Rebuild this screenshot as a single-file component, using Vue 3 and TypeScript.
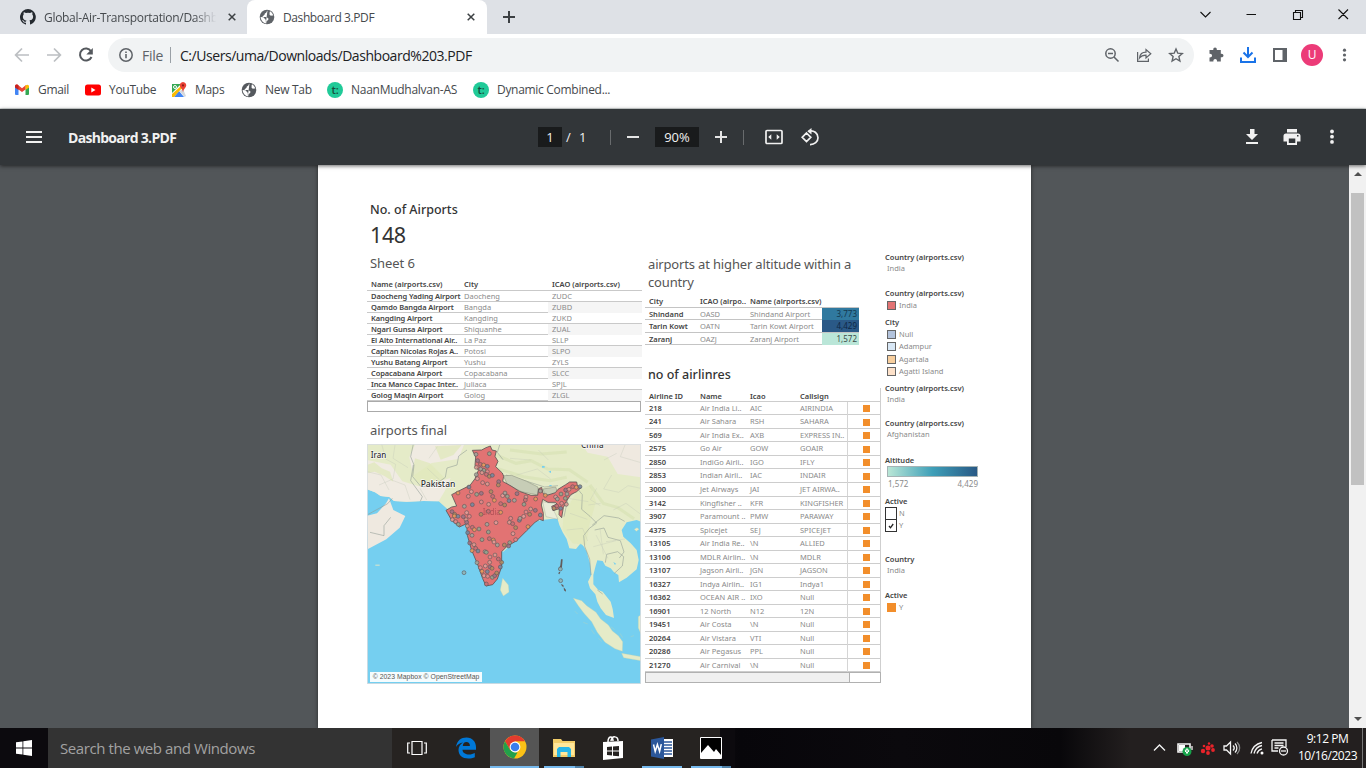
<script setup lang="ts">
interface Airport { name: string; city: string; icao: string }
interface Airline { id: string; name: string; icao: string; call: string }

const airports: Airport[] = [
  ['Daocheng Yading Airport', 'Daocheng', 'ZUDC'],
  ['Qamdo Bangda Airport', 'Bangda', 'ZUBD'],
  ['Kangding Airport', 'Kangding', 'ZUKD'],
  ['Ngari Gunsa Airport', 'Shiquanhe', 'ZUAL'],
  ['El Alto International Air..', 'La Paz', 'SLLP'],
  ['Capitan Nicolas Rojas A..', 'Potosi', 'SLPO'],
  ['Yushu Batang Airport', 'Yushu', 'ZYLS'],
  ['Copacabana Airport', 'Copacabana', 'SLCC'],
  ['Inca Manco Capac Inter..', 'Juliaca', 'SPJL'],
  ['Golog Maqin Airport', 'Golog', 'ZLGL'],
].map(([name, city, icao]) => ({ name, city, icao }))

const altitudes = [
  { city: 'Shindand', icao: 'OASD', name: 'Shindand Airport', value: '3,773', tone: 'mid' },
  { city: 'Tarin Kowt', icao: 'OATN', name: 'Tarin Kowt Airport', value: '4,429', tone: 'high' },
  { city: 'Zaranj', icao: 'OAZJ', name: 'Zaranj Airport', value: '1,572', tone: 'low' },
]

const airlines: Airline[] = [
  ['218', 'Air India Li..', 'AIC', 'AIRINDIA'],
  ['241', 'Air Sahara', 'RSH', 'SAHARA'],
  ['569', 'Air India Ex..', 'AXB', 'EXPRESS IN..'],
  ['2575', 'Go Air', 'GOW', 'GOAIR'],
  ['2850', 'IndiGo Airli..', 'IGO', 'IFLY'],
  ['2853', 'Indian Airli..', 'IAC', 'INDAIR'],
  ['3000', 'Jet Airways', 'JAI', 'JET AIRWA..'],
  ['3142', 'Kingfisher ..', 'KFR', 'KINGFISHER'],
  ['3907', 'Paramount ..', 'PMW', 'PARAWAY'],
  ['4375', 'Spicejet', 'SEJ', 'SPICEJET'],
  ['13105', 'Air India Re..', '\\N', 'ALLIED'],
  ['13106', 'MDLR Airlin..', '\\N', 'MDLR'],
  ['13107', 'Jagson Airli..', 'JGN', 'JAGSON'],
  ['16327', 'Indya Airlin..', 'IG1', 'Indya1'],
  ['16362', 'OCEAN AIR ..', 'IXO', 'Null'],
  ['16901', '12 North', 'N12', '12N'],
  ['19451', 'Air Costa', '\\N', 'Null'],
  ['20264', 'Air Vistara', 'VTI', 'Null'],
  ['20286', 'Air Pegasus', 'PPL', 'Null'],
  ['21270', 'Air Carnival', '\\N', 'Null'],
].map(([id, name, icao, call]) => ({ id, name, icao, call }))

const dots: number[][] = [
  [348,58],[388,56],[353,77],[349,97],[361,88],[371,90],[382,94],[362,102],[372,106],[382,110],[366,113],[379,118],[388,124],[397,121],[349,119],[352,131],[368,143],[382,147],[416,140],[415,150],[327,156],[294,174],[334,170],[325,184],[350,178],[364,175],[393,170],[398,184],[403,196],[428,182],[435,174],[442,184],[471,176],[498,186],[496,195],[527,192],[447,197],[463,196],[492,208],[364,201],[386,208],[422,206],[434,210],[337,209],[313,214],[320,233],[328,244],[318,254],[276,230],[284,238],[294,244],[283,243],[277,254],[287,260],[295,268],[310,245],[363,238],[385,229],[422,232],[408,263],[381,268],[357,282],[320,262],[322,273],[337,277],[343,284],[323,293],[336,301],[385,291],[452,250],[448,262],[458,266],[467,278],[478,256],[480,250],[491,244],[498,231],[512,222],[526,226],[509,238],[541,240],[504,275],[459,296],[467,314],[449,323],[446,333],[433,330],[388,311],[400,315],[402,321],[412,330],[366,314],[329,324],[342,329],[347,340],[336,347],[354,348],[375,350],[379,352],[390,366],[405,360],[415,372],[425,382],[421,396],[351,383],[376,393],[361,398],[389,382],[390,396],[396,400],[382,410],[366,409],[372,422],[383,424],[397,427],[404,422],[410,414],[379,447],
  [556,181],[587,186],[592,192],[603,177],[617,165],[627,163],[638,155],[649,157],[660,155],[621,177],[616,190],[605,205],[619,208],[590,213],[582,220],[602,220],[541,168],
  [312,413],[601,402],[602,437],
]
const dotColors = ['#a3a59b', '#d99a90', '#7488a0', '#e08a89', '#b08c62', '#e39c98', '#9c7486', '#e89a5c', '#93a58f', '#c87076']
</script>

<template>
  <div class="screen">
    <header class="tabstrip">
      <div class="tab">
        <svg class="i16" viewBox="0 0 16 16"><path fill="#24292f" d="M8 0a8 8 0 0 0-2.5 15.6c.4.1.5-.2.5-.4v-1.5c-2.2.5-2.7-.9-2.7-.9-.4-.9-.9-1.200-.9-1.200-.7-.5.1-.5.1-.5.8.1 1.200.8 1.200.8.7 1.200 1.900.9 2.300.7.1-.5.3-.9.5-1.100-1.800-.2-3.600-.9-3.600-4 0-.9.3-1.600.8-2.100 0-.2-.3-1 .1-2.100 0 0 .7-.2 2.200.8a7.500 7.500 0 0 1 4 0c1.500-1 2.200-.8 2.200-.8.4 1.100.1 1.900.1 2.100.5.6.8 1.300.8 2.100 0 3.100-1.900 3.700-3.700 3.900.3.300.6.800.6 1.500v2.200c0 .2.1.5.6.4A8 8 0 0 0 8 0z"/></svg>
        <span class="tabtitle fade">Global-Air-Transportation/Dashb</span>
        <svg class="x" viewBox="0 0 8 8"><path d="M.7.7l6.600 6.600M7.300.7L.7 7.300"/></svg>
      </div>
      <div class="tab active">
        <svg class="i16 globe" viewBox="0 0 16 16"><circle cx="8" cy="8" r="7.300" fill="#5f6368"/><path fill="#fff" d="M8.500 1.500c-1.200 1-.6 2.300-2.200 2.700-.9.300-.3 1.500-1.200 1.900L3.200 8H7c1.500.100 1.400 1.400 2.600 1.700-.2 1.900-1.900 1.600-2.200 3.100l-.2 1.600A6.500 6.500 0 0 1 1.600 8l2.900.2L6 10c.9.600 1 1.500.8 4.300M11 2.300c1.500.9 2.800 2.500 3.300 4.200-1.600-.2-2.300.6-3.300-.3-1.200-1 .5-1.200-.6-2z"/></svg>
        <span class="tabtitle">Dashboard 3.PDF</span>
        <svg class="x" viewBox="0 0 8 8"><path d="M.7.7l6.600 6.600M7.300.7L.7 7.300"/></svg>
      </div>
      <svg class="plus" viewBox="0 0 12 12"><path d="M6 0v12M0 6h12"/></svg>
      <svg class="winctl" viewBox="0 0 150 14"><g fill="none" stroke="#111" stroke-width="1.100"><path d="M.5 5l5 5 5-5M46.500 7.500h9.500M93.500 5.500h7v7h-7zM95.500 5.500v-2h7v7h-2M138.500 2.500l9.500 9.500M148 2.500l-9.500 9.500"/></g></svg>
    </header>

    <div class="toolbar">
      <svg class="nav" viewBox="0 0 84 18"><g fill="none" stroke="#bcbfc2" stroke-width="1.700"><path d="M15 9H2M8 2.500L1.600 9 8 15.500M33 9h13M40 2.500L46.400 9 40 15.500"/></g><path fill="none" stroke="#54585d" stroke-width="2" d="M77 5.200A6 6 0 1 0 77.500 11"/><path fill="#54585d" d="M78.800 2v6.500h-6.500z"/></svg>
      <div class="omni">
        <svg class="info" viewBox="0 0 14 14"><circle cx="7" cy="7" r="6.200" fill="none" stroke="#5f6368" stroke-width="1.500"/><path stroke="#5f6368" stroke-width="1.600" d="M7 6v4.300M7 3.400V5"/></svg>
        <span class="file">File</span><i></i><span class="url">C:/Users/uma/Downloads/Dashboard%203.PDF</span>
        <svg class="omniicons" viewBox="0 0 80 18"><g fill="none" stroke="#5f6368" stroke-width="1.500"><circle cx="6.500" cy="7.500" r="4.700"/><path d="M10 11l4.500 4.500M4 7.500h5"/><path stroke-width="1.200" d="M33.600 6v9.400h10.800V12.500M35.500 12c.5-4 3-5.800 6.500-5.800V3.500l4.800 4.200-4.800 4.200V9.200c-3 0-5 .8-6.500 2.800z"/><path stroke-width="1.400" d="M72 3l1.800 4.200 4.500.4-3.400 3 1 4.400-3.900-2.300-3.900 2.300 1-4.400-3.400-3 4.500-.4z"/></g></svg>
      </div>
      <svg class="tools" viewBox="0 0 150 24"><path fill="#5f6368" d="M2.500 7h3.800c-.5-3.300 4-3.300 3.500 0h4v3.700c3.600-.5 3.600 4.100 0 3.600v4.200H10c.3-3.200-3.900-3.200-3.600 0H2.500v-4c3.400.2 3.400-4 0-3.700z"/><path fill="none" stroke="#1a73e8" stroke-width="2" d="M41 4v10M36.500 9.500L41 14l4.500-4.500M34 14.500V19h14v-4.500"/><path fill="none" stroke="#5f6368" stroke-width="2" d="M67 6h12v12H67z"/><path fill="#5f6368" d="M75.500 6H80v13h-4.500z"/><circle cx="105" cy="12" r="11" fill="#ec3b78"/><g fill="#5f6368"><circle cx="137.500" cy="7.200" r="1.600"/><circle cx="137.500" cy="12" r="1.600"/><circle cx="137.500" cy="16.800" r="1.600"/></g><text x="105" y="16.300" text-anchor="middle" fill="#fff" font-family="Open Sans" font-size="12">U</text></svg>
    </div>

    <nav class="bookmarks">
      <div class="bm b1"><svg viewBox="0 0 16 16"><path fill="#4285f4" d="M1 4l3.500 2.500V13H2a1 1 0 0 1-1-1z"/><path fill="#34a853" d="M15 4l-3.500 2.500V13H14a1 1 0 0 0 1-1z"/><path fill="#ea4335" d="M1 4.500C1 2.500 2.500 2 4 3l4 3.200L12 3l-.5 4.500L8 10 4.500 7.500z"/><path fill="#fbbc04" d="M11.500 3.400C13.500 2 15 2.800 15 4.500v1l-3.500 2.600z"/><path fill="#c5221f" d="M1 4.500C1 3 2.500 2 4 3l.5.4V8L1 5.500z"/></svg><span>Gmail</span></div>
      <div class="bm b2"><svg viewBox="0 0 16 16"><rect y="2.500" width="16" height="11" rx="2.500" fill="#f00"/><path fill="#fff" d="M6.300 5.500L10.500 8l-4.200 2.500z"/></svg><span>YouTube</span></div>
      <div class="bm b3"><svg viewBox="0 0 16 16"><path fill="#34a853" d="M1 2h9L1 11z"/><path fill="#4285f4" d="M3 15l5-6 5 6z"/><path fill="#fbbc04" d="M1 15v-3l9-8 1.500 1.500L3 15z"/><path fill="#d5d8dc" d="M8.500 9L12 7l3 7-1.500 1z"/><path fill="#ea4335" d="M12 0a3.300 3.300 0 0 1 3 4.500C14.500 6 12.500 7 12 10c-.5-3-2.500-4-3-5.500A3.300 3.300 0 0 1 12 0z"/><circle cx="12" cy="3.400" r="1.100" fill="#8c1d18"/><circle cx="4" cy="5" r="1.500" fill="none" stroke="#fff"/></svg><span>Maps</span></div>
      <div class="bm b4"><svg viewBox="0 0 16 16"><circle cx="8" cy="8" r="7.300" fill="#55595e"/><path fill="#fff" d="M8.500 1.500c-1.200 1-.6 2.300-2.200 2.700-.9.300-.3 1.500-1.200 1.900L3.200 8H7c1.500.100 1.400 1.400 2.600 1.700-.2 1.900-1.900 1.600-2.200 3.100l-.2 1.600A6.500 6.500 0 0 1 1.600 8l2.900.2L6 10c.9.600 1 1.500.8 4.300M11 2.300c1.500.9 2.800 2.500 3.300 4.200-1.600-.2-2.300.6-3.300-.3-1.200-1 .5-1.200-.6-2z"/></svg><span>New Tab</span></div>
      <div class="bm b5"><b>t:</b><span>NaanMudhalvan-AS</span></div>
      <div class="bm b6"><b>t:</b><span>Dynamic Combined...</span></div>
    </nav>

    <div class="pdfbar">
      <div class="pleft"><svg width="16" height="12" viewBox="0 0 16 12"><path stroke="#f1f1f1" stroke-width="2" d="M0 1h16M0 6h16M0 11h16"/></svg><strong>Dashboard 3.PDF</strong></div>
      <div class="pmid">
        <span class="pageno">1</span><span class="slash">/</span><span class="total">1</span><i></i>
        <svg class="minus" viewBox="0 0 12 12"><path d="M0 6h12"/></svg>
        <span class="zoom">90%</span>
        <svg class="plusz" viewBox="0 0 12 12"><path d="M0 6h12M6 0v12"/></svg><i class="second"></i>
        <svg class="fit" viewBox="0 0 18 16"><rect x="1" y="1.500" width="16" height="13" rx="1" fill="none" stroke="#f1f1f1" stroke-width="1.700"/><path fill="#f1f1f1" d="M3.200 8L6.300 5.300v5.400zM14.800 8l-3.100-2.700v5.400z"/></svg>
        <svg class="rot" viewBox="0 0 18 18"><path fill="none" stroke="#f1f1f1" stroke-width="1.700" d="M5.500 5L9.800 9.300 5.500 13.600 1.200 9.300zM7.500 3.200C13 1.500 17 5.500 17 9.700c0 4-3.500 7-8 6.900"/><path fill="#f1f1f1" d="M10.500 0v6.500L6.300 3.300z"/></svg>
      </div>
      <svg class="pright" viewBox="0 0 92 18"><g fill="#f1f1f1"><path d="M5 1h4.500v5H13l-6 6-6-6h4zM1 14h12v2H1zM42 1h10v3.500H42z"/><path d="M41 5.500h12A2.500 2.500 0 0 1 55.500 8v5.500H52V17H42v-3.500h-3.500V8A2.500 2.500 0 0 1 41 5.500z"/><circle cx="87" cy="3.500" r="1.900"/><circle cx="87" cy="8.700" r="1.900"/><circle cx="87" cy="13.900" r="1.900"/></g><path fill="#323639" d="M43.800 10.500h6.500v4.500h-6.500zM52 7h1.500v1.500H52z"/></svg>
    </div>

    <main class="viewer">
      <article class="page">
        <section class="left">
          <h2 class="kpi">No. of Airports</h2>
          <p class="big">148</p>
          <h3>Sheet 6</h3>
          <div class="arow ahead"><b>Name (airports.csv)</b><b>City</b><b>ICAO (airports.csv)</b></div>
          <div v-for="a in airports" :key="a.icao" class="arow"><b>{{ a.name }}</b><span>{{ a.city }}</span><span class="shade">{{ a.icao }}</span></div>
          <div class="hscroll"></div>
          <h3 class="maptitle">airports final</h3>
          <svg class="map" viewBox="21 27 822 720">
            <rect x="21" y="27" width="822" height="720" fill="#75cff0"/>
            <path fill="#e5ebc8" d="M21 27V163L45 172 62 183 88 186 102 198 140 200 190 198 236 199 262 222 300 240 340 300 430 350 500 285 520 262 545 255 592 250 598 270 608 292 620 312 628 340 648 342 662 325 672 335 680 350 690 385 694 420 684 440 690 460 706 478 712 500 722 520 738 540 762 549 758 522 752 500 740 485 728 470 715 465 700 448 700 420 707 392 712 376 728 378 736 392 752 400 762 412 775 420 777 442 800 428 830 403 836 375 830 345 812 325 790 305 785 285 800 262 830 255 843 260V27z"/>
            <path fill="#f0ebe2" d="M21 27h145l-18 40 12 55 55-38 80-12 18-45H21zM21 75v88l24 9 17 11 26 3 14 12 38 2 50-2 46 1 18-30 18-40-95 25-50-15-35-50z"/>
            <path fill="#efe9e0" d="M21 242l30-7 27-30 9-15 13 35 36 18-17 35-40 35-55 29zM665 27h178v100l-70-10-30-52-60-12z"/>
            <path fill="#e0e8bb" d="M21 90l22-8 22 18 25 10 10 30-28-18-28-12-23 4zM165 70l45 15 45 45-34 22-48-9-18-25zM225 34l80-4-25 30-38 14zM610 240l40-70 40-20 18 50-20 70-10 60-40-5-30-40z" opacity=".75"/>
            <g fill="none" stroke="#d4dfae" stroke-width="9" opacity=".5"><path d="M408 60l60 25 45-8 50 25 65 2 55 38M410 100l80 25 80 12 50-10M450 45l95 12 75-6M690 150l40 55 42 12 50 34"/></g>
            <g fill="none" stroke="#929c94" stroke-width="1.700"><path d="M160 27l-8 38 10 25-4 35 25 30 38-3 35-25 5-28 30-9 5-27 25-18M160 90l-8 47 35 48-6 14M21 240l62-34 14-16M30 292l42 10M72 302v-30l20-25M420 27l-8 25 17 22M438 120l60 18 56 18 40-4M612 245l12-55 29-28 14 17-2 44 25 21 20 20-22 16-17 22 3 32 15 38 4 48M697 270l35-28 44 7 18 10M704 285l28-6 12 28 37 10 11 34-14 18M740 358l33-8 18 15-4 28-24 22M740 358l-4 25M712 465l16 12"/></g>
            <g fill="none" stroke="#bfc5b7" stroke-width="1"><path d="M65 27l12 45 30 16-8 44-42 18M105 30l-6 40 45 28M21 110l42 10 24 45M95 135l40 15 15 44M180 160l20 35M202 100l36 34M232 35l-25 35M625 190l60 10M630 235l52 18M620 285l48-5 15 38M708 300l36 70M700 335l68-18M720 280l10 78M738 320l57-8M760 225l38-20 43 32M710 160l-19 34 30 18M685 210l37-5M755 120l-24 42 45 10 28-20 39 8M770 55l-38 20M450 70l62 5M535 45l30 30M470 120l62-18 40 30M795 30l-14 35 62 18"/></g>
            <path fill="#c7cdb6" stroke="#858a79" stroke-width="1.500" d="M430 122l25-1 45 18 34 17v24l-50-10-42-22zM549 162l38-6 6 16-18 8-20-1z"/>
            <path fill="#e9ecd8" stroke="#929c94" d="M548 200l15 3 27 3-12 15 8 15 8 17-36-8z"/>
            <g fill="#e5ebc8" stroke="#c6d5ae"><path d="M428 430l17 20 2 21-17 12-9-18zM640 490L665 497 680 512 708 532 722 552 745 570 757 588 775 602 788 620 787 649 765 641 735 622 712 592 695 560 672 535 655 512zM785 655l58 10v12l-52-9zM835 545l8-6v58l-8-18zM670 562l13 5M694 584l10 14M715 610l11 10M752 575l12 9M780 595l8 13M812 605l10-3M645 529l8 8M823 283l8-5 6 5-8 6z"/></g>
            <path fill="#75cff0" d="M546 93h8v5h-8zM565 110l8-3v7zM568 150h7v3h-7zM760 380l9 7-5 2z"/>
            <path fill="#dfe6c9" d="M46 389h13v3H46z"/>
            <path fill="#e27373" stroke="#5b5555" stroke-width="2.500" stroke-linejoin="round" d="M337 46l28-1 13-7 13-5 5 12 13 3-4 16 9 15-7 16 20 19 4 10-3 15 25 14 25 16 35 12h20l3-20 9-4 4 18 9 7 28-9 8-10 23-14 12-8h21l2 10 10 8-12 11-18 9-12 18-10 21-5 30-8-9 1-18-19 6-4-13 16-7-5-5h-22l-16-9-4 17 6 25v22l-11-4-14 9-25 25-30 30-30 18-15 15v45l-13 37-14 17-20 4-10-22-16-45-17-40-13-45-2-35-22 10-23-20-17-30 17-10 15-3-15-34 25-13 30-15 15-20 10-25-10-15 2-25z"/>
            <path fill="#625b5b" d="M603 373h5l-2 22-7 12-3-4 5-12zM597 410l4 2-3 6-3-2zM603 447l7 3 1 6-5-2zM611 457l7 8-1 5-5-4z"/>
            <text x="368" y="239" font-family="Noto Sans" font-size="24" fill="#a84750" opacity=".75" textLength="54">India</text>
            <circle v-for="(d, i) in dots" :key="i" :cx="d[0]" :cy="d[1]" r="5.800" :fill="i > dots.length - 4 ? '#8fb5b8' : dotColors[(i * 7 + i % 3) % 10]" fill-opacity=".9" stroke="#5d5657" stroke-opacity=".9" stroke-width="2"/>
            <g font-family="Noto Sans" font-size="24" fill="#2c2c2c" stroke="#fff" stroke-width="3" paint-order="stroke" font-weight="500"><text x="32" y="69" textLength="47">Iran</text><text x="182" y="155" textLength="104" lengthAdjust="spacingAndGlyphs">Pakistan</text><text x="663" y="38" textLength="68">China</text></g>
            <path fill="#fff" opacity=".93" d="M30 711h336v30H30z"/><text x="38" y="732" font-family="Liberation Sans" font-size="20.500" fill="#555" textLength="320">© 2023 Mapbox © OpenStreetMap</text>
            <rect x="22" y="28" width="820" height="718" fill="none" stroke="#d8dde0" stroke-width="3"/>
          </svg>
        </section>

        <section class="mid">
          <h3 class="alt">airports at higher altitude within a country</h3>
          <div class="hrow hhead"><b>City</b><b>ICAO (airpo..</b><b>Name (airports.csv)</b></div>
          <div v-for="h in altitudes" :key="h.icao" class="hrow"><b>{{ h.city }}</b><span>{{ h.icao }}</span><span>{{ h.name }}</span><em :class="h.tone">{{ h.value }}</em></div>
          <h2 class="airtitle">no of airlinres</h2>
          <div class="airtable">
            <div class="lrow lhead"><b>Airline ID</b><b>Name</b><b>Icao</b><b>Callsign</b></div>
            <div v-for="l in airlines" :key="l.id" class="lrow"><b>{{ l.id }}</b><span>{{ l.name }}</span><span>{{ l.icao }}</span><span>{{ l.call }}</span><em><i></i></em></div>
          </div>
          <div class="lscroll"><i></i></div>
        </section>

        <aside class="legend">
          <div class="g g1"><b>Country (airports.csv)</b><span class="in">India</span></div>
          <div class="g g2"><b>Country (airports.csv)</b><span class="key"><i class="red"></i>India</span></div>
          <div class="g g3"><b>City</b><span class="key"><i class="c1"></i>Null</span><span class="key"><i class="c2"></i>Adampur</span><span class="key"><i class="c3"></i>Agartala</span><span class="key"><i class="c4"></i>Agatti Island</span></div>
          <div class="g g4"><b>Country (airports.csv)</b><span class="in">India</span></div>
          <div class="g g5"><b>Country (airports.csv)</b><span class="in">Afghanistan</span></div>
          <div class="g g6"><b>Altitude</b><div class="ramp"></div><div class="range"><span>1,572</span><span>4,429</span></div></div>
          <div class="g g7"><b>Active</b><span class="chk"><i></i>N</span><span class="chk"><i><svg viewBox="0 0 8 8"><path d="M2 4l1.500 1.800L6.200 2"/></svg></i>Y</span></div>
          <div class="g g8"><b>Country</b><span class="in">India</span></div>
          <div class="g g9"><b>Active</b><span class="key"><i class="or"></i>Y</span></div>
        </aside>
      </article>
      <div class="sb"><svg viewBox="0 0 8 4"><path d="M0 4l4-4 4 4z"/></svg><div class="thumb"></div><svg viewBox="0 0 8 4"><path d="M0 0l4 4 4-4z"/></svg></div>
    </main>

    <footer class="taskbar">
      <div class="start"><svg viewBox="0 0 16 16"><path fill="#fff" d="M0 2.300L6.500 1.400V7.600H0zM7.300 1.300L16 0v7.600H7.300zM0 8.400h6.500v6.200L0 13.700zM7.300 8.400H16V16l-8.700-1.300z"/></svg></div>
      <div class="search">Search the web and Windows</div>
      <div class="apps">
        <div class="app"><svg width="20" height="16" viewBox="0 0 20 16"><g fill="none" stroke="#fff" stroke-width="1.200"><path d="M5 1.500h10v13H5zM3 3H.7v10H3M17 3h2.300v10H17"/></g></svg></div>
        <div class="app"><svg width="20" height="22" viewBox="0 0 20 22"><path fill="#0078d7" d="M0 10C1 3.500 5 .5 10.500.5c6 0 9.500 4.500 9.500 9.500v2.700H6.500c.2 3.300 3.200 4.700 6.500 4.700 2.200 0 4.200-.6 5.800-1.500v4.300c-1.800.9-4 1.400-6.500 1.400-6 0-9.800-3.500-9.800-8.500 0-3.500 2-6 4.600-7.500C4 6 1.500 7.500 0 10zM6.800 9h7.100c0-2.500-1.300-4-3.500-4S7 6.500 6.800 9z"/></svg></div>
        <div class="app on"><svg width="24" height="24" viewBox="0 0 24 24"><circle cx="12" cy="12" r="11.500" fill="#fbc116"/><path fill="#e33b2e" d="M2 6.300A11.500 11.500 0 0 1 22 6.300H12l-5 8.500z"/><path fill="#22a04b" d="M2 6.300l5 8.500 5 2.700h2.500L11 23.500A11.500 11.500 0 0 1 2 6.300z"/><circle cx="12" cy="12" r="5.400" fill="#fff"/><circle cx="12" cy="12" r="4.300" fill="#3b7ded"/></svg></div>
        <div class="app run"><svg width="22" height="20" viewBox="0 0 22 20"><path fill="#f2cd69" d="M0 1h8l1.500 2H22v16H0z"/><path fill="#ffe79a" d="M1 5h20v12H1z"/><path fill="#28b6e8" d="M4 19v-8l2-2h10l2 2v8h-3.500v-5h-7v5z"/></svg></div>
        <div class="app"><svg width="22" height="24" viewBox="0 0 22 24"><path fill="#fff" d="M1 6l20-1v17L1 24z"/><path fill="none" stroke="#fff" stroke-width="1.500" d="M6 6c0-6 5-7 5-1M9 5c1-6 7-5 7 0"/><path fill="#262321" d="M5 11l5-.4v4H5zM11 10.500l6-.4v4.500h-6zM5 15.600h5v4L5 19zM11 15.600h6v4.600l-6-.5z"/></svg></div>
        <div class="app w"><svg width="22" height="22" viewBox="0 0 22 22"><path fill="#fff" d="M12 2h10v18H12z"/><path stroke="#2b579a" stroke-width="1.300" d="M13 5h8M13 8h8M13 11h8M13 14h8M13 17h8"/><path fill="#2b579a" d="M0 2.500L13 0v22L0 19.500z"/><path fill="none" stroke="#fff" stroke-width="1.500" d="M2.500 7.500l1.700 7 2.200-7 2.200 7 1.700-7.300"/></svg></div>
        <div class="app run"><svg width="22" height="22" viewBox="0 0 22 22"><path fill="#000" stroke="#fff" d="M.5.5h21v21H.5z"/><path fill="#fff" d="M1 20v-4l7-8 6 7 2-3 5 6v3H1z"/></svg></div>
      </div>
      <div class="tray">
        <svg viewBox="0 0 140 20"><g fill="none" stroke="#f4f4f4" stroke-width="1.300"><path d="M1 12.500L6.500 7l5.500 5.500"/><path stroke-width="1.600" d="M25 6h12v8H25z"/><path d="M39 8v4"/><path d="M71 8h2.500l4-4v12l-4-4H71zM80 7.500c1.500 1.500 1.500 3.500 0 5M82 5.500c2.500 2.500 2.500 6.500 0 9"/><path stroke="#888" d="M84 4c3.500 3.500 3.500 8.500 0 12"/><path d="M98 15.500c1-5.500 4.500-9.500 11-11M101 15.500c1-4 3.500-7 8-8M104 15.500c.8-2.500 2.500-4 5-4.700"/><path d="M119 2h14v7M119 2v11h6M121.500 5h9M121.500 7.500h9M121.500 10h4"/><circle cx="130.500" cy="13" r="4"/><path d="M128 13h5"/></g><circle cx="109" cy="15" r="1.500" fill="#fff"/><path fill="#fff" d="M26 7h6v6h-6z"/><circle cx="34" cy="13.500" r="4.500" fill="#16a34a"/><path stroke="#fff" fill="none" d="M34 16v-5M32 13l2-2.500 2 2.500-2 2z"/><g fill="#e8232a"><circle cx="55" cy="10" r="2.500"/><circle cx="50" cy="13" r="2.200"/><circle cx="59" cy="8" r="1.800"/><circle cx="60" cy="12" r="1.900"/><circle cx="55" cy="15" r="1.900"/><circle cx="51" cy="8" r="1.300"/><circle cx="56" cy="5.500" r="1.200"/></g></svg>
        <div class="clock"><span>9:12 PM</span><span>10/16/2023</span></div>
      </div>
    </footer>
  </div>
</template>

<style>
html, body { margin: 0; overflow: hidden; }
</style>

<style scoped>
* { box-sizing: border-box; }
svg { display: block; flex: none; }
h2, h3, p { margin: 0; }
.screen { width: 1366px; height: 768px; display: flex; flex-direction: column; font-family: "Open Sans", "Noto Sans", sans-serif; background: #fff; overflow: hidden; }
.tabstrip { height: 34px; flex: none; background: #dee1e6; display: flex; }
.tab { width: 247px; padding: 0 10px 0 20px; display: flex; align-items: center; }
.tab.active { width: 240px; background: #fff; border-radius: 8px 8px 0 0; padding: 0 11px 0 12px; }
.i16 { width: 16px; height: 16px; }
.tabtitle { flex: none; width: 174px; margin: 0 10px 0 8px; font-size: 12px; letter-spacing: -.42px; color: #45494d; white-space: nowrap; }
.active .tabtitle { width: 177px; margin-right: 7px; letter-spacing: -.4px; }
.fade { letter-spacing: -.3px; mask-image: linear-gradient(90deg, #000 86%, transparent 99%); }
.x { width: 8px; height: 8px; fill: none; stroke: #3c4043; stroke-width: 1.5; }
.plus { width: 12px; height: 12px; margin: 11px 0 0 16px; stroke: #3c4043; stroke-width: 2; }
.winctl { width: 150px; height: 14px; margin: 7px 16px 0 auto; }
.toolbar { height: 38px; flex: none; display: flex; padding-top: 4px; }
.nav { width: 84px; height: 18px; margin: 8px 10px 0 14px; }
.omni { width: 1086px; height: 34px; border-radius: 17px; background: #f1f3f4; display: flex; align-items: center; padding-left: 11px; font-size: 14px; }
.info { width: 14px; height: 14px; }
.file { color: #5f6368; margin-left: 9px; width: 20px; white-space: nowrap; letter-spacing: -.3px; }
.omni i { width: 1px; height: 16px; background: #9aa0a6; margin: 0 9px 0 8px; }
.url { color: #202124; letter-spacing: -.45px; }
.omniicons { width: 80px; height: 18px; margin: 0 10px 0 auto; }
.tools { width: 150px; height: 24px; margin: 5px 0 0 13px; }
.bookmarks { height: 37px; flex: none; border-bottom: 1px solid #d9dddd; display: flex; align-items: center; padding: 0 0 1px 14px; font-size: 12px; color: #45494d; }
.bm { display: flex; align-items: center; gap: 8px; white-space: nowrap; letter-spacing: -.3px; }
.bm svg, .bm b { width: 16px; height: 16px; }
.bm b { border-radius: 50%; background: #20ca98; color: #174b3c; font-size: 11px; line-height: 15px; text-align: center; font-weight: 600; }
.b1 { width: 71px; } .b2 { width: 86px; } .b3 { width: 70px; } .b4 { width: 86px; } .b5 { width: 146px; letter-spacing: -.27px; }
.pdfbar { height: 56px; flex: none; background: #323639; color: #f1f1f1; display: grid; grid-template-columns: 538px 1fr 121px; align-items: center; box-shadow: 0 1px 4px #0009; position: relative; z-index: 2; }
.pleft { display: flex; align-items: center; gap: 26px; padding-left: 26px; }
.pleft strong { font-size: 14px; font-weight: 700; letter-spacing: -.7px; }
.pmid { display: flex; align-items: center; font-size: 13px; }
.pageno, .zoom { background: #191b1c; height: 20px; width: 24px; text-align: center; line-height: 20px; font-weight: 500; }
.slash { margin-left: 4px; width: 13px; } .total { width: 8px; }
.pmid i { width: 1px; height: 15px; background: #686b6d; margin: 0 16px 0 23px; }
.zoom { width: 44px; margin: 0 16px; }
.minus, .plusz { width: 12px; height: 12px; stroke: #e5e5e5; stroke-width: 2; }
.pmid i.second { margin: 0 21px 0 16px; }
.fit { width: 18px; height: 16px; }
.rot { width: 18px; height: 18px; margin-left: 18px; }
.pright { width: 92px; height: 18px; }
.viewer { height: 563px; flex: none; background: #525659; display: flex; padding-left: 318px; }
.page { width: 713px; background: #fff; padding-left: 49px; display: grid; grid-template-columns: 275px 237px 150px; column-gap: 3px; align-items: start; font-family: "Noto Sans", sans-serif; font-size: 7.5px; color: #8a8a8a; white-space: nowrap; box-shadow: 0 0 4px #0008; }
.page b { font-weight: 600; color: #444; }
h2 { font-size: 12.5px; line-height: 18px; font-weight: 500; color: #333; }
h3 { font-size: 13px; line-height: 18px; font-weight: 400; color: #555; letter-spacing: -.08px; }
.kpi { margin: 36px 0 0 3px; }
.big { font-size: 21.5px; line-height: 30px; margin: 1px 0 0 3px; color: #333; letter-spacing: -.4px; }
.left h3 { margin: 4px 0 0 3px; }
.arow { display: grid; grid-template-columns: 97px 84px 94px; height: 11px; line-height: 11px; border-bottom: 1px solid #c9c9c9; }
.arow > :first-child { padding-left: 4px; letter-spacing: -.1px; }
.arow > :last-child { padding-left: 4px; }
.arow.ahead { margin-top: 6px; padding-top: 1px; height: 13px; }
.ahead > :first-child { letter-spacing: 0; }
.arow:nth-of-type(odd) .shade { background: #f5f5f5; }
.hscroll { height: 11px; border: 1px solid #aaa; margin: 0 1px 0 0; }
.left h3.maptitle { margin-top: 9px; }
.map { width: 274px; height: 240px; margin-top: 5px; }
.mid { padding-top: 90px; }
.alt { white-space: normal; margin-left: 3px; width: 225px; letter-spacing: -.16px; }
.hrow { width: 214px; display: grid; grid-template-columns: 51px 50px 76px 37px; height: 12.6px; line-height: 12px; border-bottom: 1px solid #c4c4c4; }
.hrow > * { padding-left: 4px; }
.hhead { margin-top: 4px; }
.hrow em { font-style: normal; text-align: right; padding-right: 2px; font-size: 8px; }
.hrow em.mid { padding-top: 0; background: #30799f; color: #12384f; }
.high { background: #2a5987; color: #0e2745; }
.low { background: #bae6d8; color: #3b4b48; }
.airtitle { margin: 21px 0 0 3px; }
.airtable { border-right: 1px solid #cfcfcf; width: 236px; margin-top: 4px; }
.lrow { display: grid; grid-template-columns: 51px 50px 50px 51px 33px; height: 13.53px; line-height: 13.5px; border-bottom: 1px solid #cdcdcd; }
.lrow > * { padding-left: 4px; }
.lhead { line-height: 16px; }
.lrow em { border-left: 1px solid #d5d5d5; padding: 0; display: flex; align-items: center; justify-content: center; }
.lrow em i { width: 7px; height: 7px; background: #f28e2b; margin-left: 5px; }
.lscroll { width: 236px; height: 11px; border: 1px solid #b1b1b1; }
.lscroll i { display: block; width: 204px; height: 9px; background: #f0f0f0; border-right: 1px solid #b1b1b1; }
.legend { padding-top: 87px; }
.g { display: flex; flex-direction: column; line-height: 11px; }
.g b { height: 11px; }
.in { padding-left: 2px; }
.key { display: flex; align-items: center; height: 12.3px; padding-left: 2px; }
.key i { width: 9px; height: 9px; border: 1px solid #666; margin-right: 3px; }
.red { background: #e27373; } .c1 { background: #b3c3dc; } .c2 { background: #d8e7f5; } .c3 { background: #f8cf9e; } .c4 { background: #fde1c9; }
.key i.or { background: #f28e2b; border: 0; }
.g2 { margin-top: 14px; } .g3 { margin-top: 6px; } .g4 { margin-top: 6px; } .g5 { margin-top: 13px; } .g6 { margin-top: 15px; } .g7 { margin-top: 7px; } .g8 { margin-top: 23px; } .g9 { margin-top: 14px; }
.ramp { width: 91px; height: 11px; margin-left: 2px; border: 1px solid #a5b3b5; background: linear-gradient(90deg, #b9e6d6, #3e9fb8 50%, #295986); }
.range { width: 90px; margin-left: 3px; display: flex; justify-content: space-between; height: 12px; line-height: 13px; font-size: 8px; }
.chk { display: flex; height: 12px; align-items: center; }
.chk i { width: 12px; height: 13px; border: 1px solid #333; margin-right: 2px; }
.chk svg { width: 8px; height: 8px; margin: 2px 1px; fill: none; stroke: #222; stroke-width: 1.3; }
.sb { width: 17px; margin-left: auto; background: #f1f1f1; display: flex; flex-direction: column; align-items: center; padding: 7px 0 7px; }
.sb svg { width: 8px; height: 4px; fill: #505050; }
.thumb { width: 13px; height: 292px; background: #c1c1c1; margin: 17px 0 auto; }
.taskbar { height: 40px; flex: none; background: linear-gradient(90deg, #0c0a0e 0 720px, #07060a 740px, #0b090d 900px, #08070a 1060px, #231f1f 1130px); display: flex; }
.start { width: 48px; display: flex; align-items: center; justify-content: center; }
.start svg { width: 16px; height: 16px; }
.search { width: 344px; background: #333; color: #a2a2a2; font-size: 15px; line-height: 40px; padding-left: 12px; letter-spacing: -.42px; }
.apps { display: flex; width: 343px; background: linear-gradient(90deg, #262321 328px, #0c0a0e 328px); }
.app { width: 49px; height: 40px; display: flex; align-items: center; justify-content: center; }
.app.on { background: #555; border-bottom: 2px solid #76b9ed; }
.app.run { background: linear-gradient(90deg, #76b9ed 31px, #4f81a8 31px) center bottom / 40px 2px no-repeat; }
.app.w { background: linear-gradient(#76b9ed, #76b9ed) center bottom / 40px 2px no-repeat; }
.tray { margin-left: auto; display: flex; align-items: center; border-right: 1px solid #777; margin-right: 3px; }
.tray > svg { width: 140px; height: 20px; margin-right: 2px; }
.clock { width: 65px; display: flex; flex-direction: column; align-items: center; color: #fff; font-size: 12px; line-height: 17px; letter-spacing: -.45px; margin: -3px 2px 0 0; }
</style>
